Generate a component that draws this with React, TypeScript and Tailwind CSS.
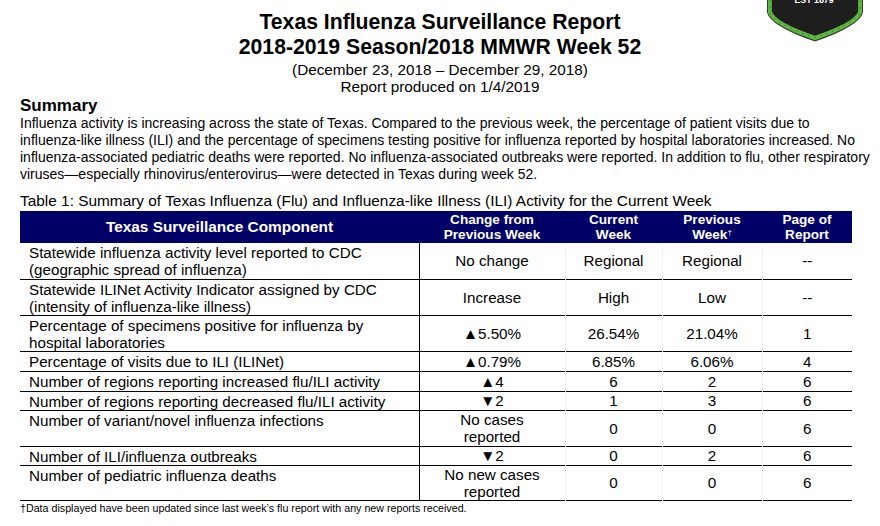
import React from "react"

const rows = [
    { label: ["Statewide influenza activity level reported to CDC", "(geographic spread of influenza)"], change: ["No change"], cur: "Regional", prev: "Regional", page: "--", h: "h-[36px]" },
    { label: ["Statewide ILINet Activity Indicator assigned by CDC", "(intensity of influenza-like illness)"], change: ["Increase"], cur: "High", prev: "Low", page: "--", h: "h-[36px]" },
    { label: ["Percentage of specimens positive for influenza by", "hospital laboratories"], change: ["▲5.50%"], cur: "26.54%", prev: "21.04%", page: "1", h: "h-[36px]" },
    { label: ["Percentage of visits due to ILI (ILINet)"], change: ["▲0.79%"], cur: "6.85%", prev: "6.06%", page: "4", h: "h-[20px]" },
    { label: ["Number of regions reporting increased flu/ILI activity"], change: ["▲4"], cur: "6", prev: "2", page: "6", h: "h-[20px]" },
    { label: ["Number of regions reporting decreased flu/ILI activity"], change: ["▼2"], cur: "1", prev: "3", page: "6", h: "h-[19px]" },
    { label: ["Number of variant/novel influenza infections"], change: ["No cases", "reported"], cur: "0", prev: "0", page: "6", h: "h-[36px]" },
    { label: ["Number of ILI/influenza outbreaks"], change: ["▼2"], cur: "0", prev: "2", page: "6", h: "h-[19px]" },
    { label: ["Number of pediatric influenza deaths"], change: ["No new cases", "reported"], cur: "0", prev: "0", page: "6", h: "h-[34px]" },
]

const Shield = () => (
    <svg className="absolute left-[766px] top-0" width="98" height="44" viewBox="0 0 100 44">
        <path d="M1,-4 L1,12 Q4,26 50,42 Q96,26 99,12 L99,-4 Z" fill="#3a3a3a" />
        <path d="M2,-4 L2,12 Q5,25 50,40.5 Q95,25 98,12 L98,-4 Z" fill="#5cb83e" />
        <path d="M6,-4 L6,11 Q9,22 50,36 Q91,22 94,11 L94,-4 Z" fill="#1e1e1e" />
        <path d="M4,0 L4,11.5 Q7,23.5 50,38.3 Q93,23.5 96,11.5 L96,0" fill="none" stroke="#2a5a1a" strokeWidth="0.8" strokeDasharray="1.5 5" />
        <text x="49" y="3" textAnchor="middle" fontSize="9" fontWeight="bold" fill="#ffffff" fontFamily="Liberation Sans, Arial, sans-serif">EST 1879</text>
    </svg>
)

export default function App() {
    return (
        <div className="relative w-[880px] h-[526px] overflow-hidden bg-white text-black font-['Liberation_Sans',Arial,sans-serif]">
            <Shield />
            {/* report heading */}
            <div className="flex flex-col items-center pt-[9px]">
                <h1 className="text-[21.2px] font-bold leading-[25px]">Texas Influenza Surveillance Report</h1>
                <h2 className="text-[21.2px] font-bold leading-[25px]">2018-2019 Season/2018 MMWR Week 52</h2>
                <p className="text-[15.3px] leading-[17px] mt-[2px]">(December 23, 2018 – December 29, 2018)</p>
                <p className="text-[15.3px] leading-[17px]">Report produced on 1/4/2019</p>
            </div>

            <div className="px-[20px]">
                <h3 className="text-[17px] font-bold leading-[19px] mt-[1px]">Summary</h3>
                <p className="text-[14px] leading-[17px] whitespace-nowrap">
                    <span className="block">Influenza activity is increasing across the state of Texas. Compared to the previous week, the percentage of patient visits due to</span>
                    <span className="block">influenza-like illness (ILI) and the percentage of specimens testing positive for influenza reported by hospital laboratories increased. No</span>
                    <span className="block">influenza-associated pediatric deaths were reported. No influenza-associated outbreaks were reported. In addition to flu, other respiratory</span>
                    <span className="block">viruses—especially rhinovirus/enterovirus—were detected in Texas during week 52.</span>
                </p>
                <p className="text-[15.4px] leading-[17px] mt-[9px] whitespace-nowrap">Table 1: Summary of Texas Influenza (Flu) and Influenza-like Illness (ILI) Activity for the Current Week</p>

                <table className="table-fixed border-collapse w-[832px] mt-[2px]">
                    <colgroup>
                        <col className="w-[399px]" />
                        <col className="w-[146px]" />
                        <col className="w-[97px]" />
                        <col className="w-[100px]" />
                        <col className="w-[90px]" />
                    </colgroup>
                    <thead>
                        <tr className="h-[32px] bg-[#000066] text-white font-bold">
                            <th className="text-[15.4px] leading-[16px] text-center">Texas Surveillance Component</th>
                            <th className="text-[13.6px] leading-[15px] text-center">Change from<br />Previous Week</th>
                            <th className="text-[13.6px] leading-[15px] text-center">Current<br />Week</th>
                            <th className="text-[13.6px] leading-[15px] text-center">Previous<br />Week<sup className="text-[8px] font-normal">†</sup></th>
                            <th className="text-[13.6px] leading-[15px] text-center">Page of<br />Report</th>
                        </tr>
                    </thead>
                    <tbody>
                        {rows.map((r, i) => (
                            <tr key={i} className={`${r.h} border-b border-black text-[15.2px] leading-[17px]`}>
                                <td className="align-top pl-[9px] pt-[1px] border-r border-black whitespace-nowrap">
                                    {r.label.map((l, j) => (
                                        <div key={j}>{l}</div>
                                    ))}
                                </td>
                                <td className="align-middle text-center border-r border-[#f2f2f2]">
                                    {r.change.map((c, j) => (
                                        <div key={j}>{c}</div>
                                    ))}
                                </td>
                                <td className="align-middle text-center border-r border-[#f2f2f2]">{r.cur}</td>
                                <td className="align-middle text-center border-r border-[#f2f2f2]">{r.prev}</td>
                                <td className="align-middle text-center">{r.page}</td>
                            </tr>
                        ))}
                    </tbody>
                </table>
                <p className="text-[10.7px] leading-[12px] mt-[1px]">†Data displayed have been updated since last week’s flu report with any new reports received.</p>
            </div>
        </div>
    )
}
